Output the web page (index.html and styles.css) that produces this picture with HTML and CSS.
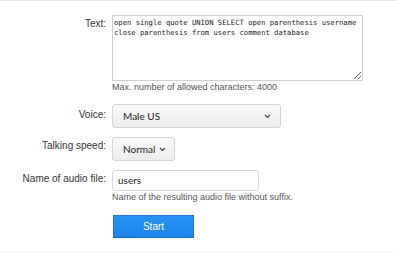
FILE: index.html
```html
<!DOCTYPE html>
<html>
<head>
<meta charset="utf-8">
<link rel="stylesheet" href="styles.css">
</head>
<body>
<div class="page">
  <div class="row row-text">
    <label class="label">Text:</label>
    <div class="field">
      <textarea class="textarea">open single quote UNION SELECT open parenthesis username close parenthesis from users comment database</textarea>
      <div class="help">Max. number of allowed characters: 4000</div>
    </div>
  </div>
  <div class="row row-voice">
    <label class="label">Voice:</label>
    <div class="field">
      <div class="select select-voice"><span>Male US</span><svg class="chev" width="7" height="5" viewBox="0 0 7 5"><path d="M1 1 L3.5 3.5 L6 1" fill="none" stroke="#444" stroke-width="1.2"/></svg></div>
    </div>
  </div>
  <div class="row row-speed">
    <label class="label">Talking speed:</label>
    <div class="field">
      <div class="select select-speed"><span>Normal</span><svg class="chev" width="7" height="5" viewBox="0 0 7 5"><path d="M1 1 L3.5 3.5 L6 1" fill="none" stroke="#444" stroke-width="1.2"/></svg></div>
    </div>
  </div>
  <div class="row row-name">
    <label class="label">Name of audio file:</label>
    <div class="field">
      <div class="input">users</div>
      <div class="help help-name">Name of the resulting audio file without suffix.</div>
      <button class="btn">Start</button>
    </div>
  </div>
</div>
</body>
</html>
```

FILE: styles.css
```css
html, body {
  margin: 0;
  padding: 0;
  background: #fff;
}
.page {
  height: 251px;
  border-top: 1px solid #e6e6e6;
  border-bottom: 1px solid #f0f0f0;
  font-family: "Liberation Sans", Arial, sans-serif;
  color: #333;
}
.row {
  display: flex;
  column-gap: 6px;
}
.label {
  width: 106px;
  flex: none;
  text-align: right;
  font-size: 10px;
  line-height: 12px;
  color: #333;
}
.field {
  display: flex;
  flex-direction: column;
  align-items: flex-start;
}
.row-text { margin-top: 14px; }
.row-text .label { padding-top: 3px; }
.textarea {
  box-sizing: border-box;
  width: 251px;
  height: 66px;
  margin: 0;
  padding: 2px 0 2px 1px;
  border: 1px solid #cfcfcf;
  font-family: "DejaVu Sans Mono", monospace;
  font-size: 7.2px;
  line-height: 9.6px;
  color: #222;
  resize: both;
  outline: none;
  overflow: hidden;
}
.help {
  font-size: 9px;
  line-height: 11px;
  color: #555;
  margin-top: 1px;
}
.row-voice { margin-top: 11px; }
.row-voice .label { padding-top: 5px; }
.select {
  box-sizing: border-box;
  height: 24px;
  display: flex;
  align-items: center;
  justify-content: space-between;
  padding: 0 9px 0 10px;
  border: 1px solid #d4d4d4;
  border-radius: 3px;
  background: linear-gradient(#f9f9f9, #ececec);
  font-family: Lato, sans-serif;
  font-size: 10px;
  color: #222;
}
.select-voice { width: 169px; }
.select-speed { width: 63px; padding-right: 8px; }
.row-speed { margin-top: 9px; }
.row-speed .label { padding-top: 3px; }
.row-name { margin-top: 9px; }
.row-name .label { padding-top: 3px; }
.input {
  box-sizing: border-box;
  width: 147px;
  height: 21px;
  padding: 0 0 0 5px;
  border: 1px solid #dadada;
  border-radius: 3px;
  font-family: Lato, sans-serif;
  font-size: 10px;
  line-height: 19px;
  color: #222;
}
.help-name { margin-top: 1px; }
.btn {
  margin: 12px 0 0 1px;
  box-sizing: border-box;
  width: 81px;
  height: 23px;
  border: 1px solid #1a78d2;
  border-bottom-color: #1565b5;
  background: linear-gradient(#2794f5, #1b84ea);
  color: #fff;
  font-family: "Liberation Sans", Arial, sans-serif;
  font-size: 10px;
  padding: 0;
}
```
